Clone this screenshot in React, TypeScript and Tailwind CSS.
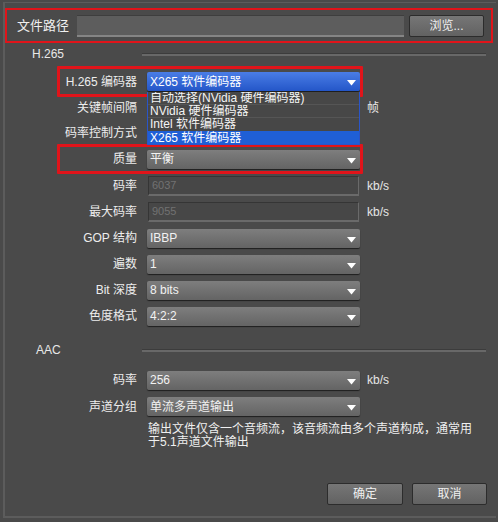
import React from "react";

function Arrow() {
  return (
    <svg width="9" height="6" viewBox="0 0 9 6" className="absolute right-[4px] top-[8px]">
      <polygon points="0,0 9,0 4.5,5.5" fill="#ffffff" />
    </svg>
  );
}

function Select({ value, blue = false }: { value: string; blue?: boolean }) {
  return (
    <div
      className={
        blue
          ? "relative w-[213px] h-[19px] rounded-[2px] flex items-center pl-[3px] text-[12px] text-white bg-linear-to-b from-[#4a7de6] to-[#2456c8] shadow-[0_1px_1px_#1a1a1a]"
          : "relative w-[213px] h-[19px] rounded-[2px] flex items-center pl-[3px] text-[12px] text-[#f2f2f2] bg-linear-to-b from-[#7e7e7e] to-[#646464] shadow-[0_1px_1px_#1e1e1e]"
      }
    >
      <span className="leading-none">{value}</span>
      <Arrow />
    </div>
  );
}

function Disabled({ value }: { value: string }) {
  return (
    <div className="w-[211px] h-[20px] ml-[1px] bg-[#474747] border-t border-l border-[#353535] border-b-2 border-r border-b-[#6a6a6a] border-r-[#6a6a6a] flex items-center pl-[3px] text-[11px] text-[#727272]">
      {value}
    </div>
  );
}

function Row({
  label,
  h,
  children,
  unit,
  red = false,
}: {
  label: string;
  h: string;
  children?: React.ReactNode;
  unit?: string;
  red?: boolean;
}) {
  return (
    <div className={`relative flex items-center ${h}`}>
      <div className="w-[132px] text-right text-[12px] text-[#ededed]">{label}</div>
      <div className="ml-[10px] w-[213px] flex items-center">{children}</div>
      {unit ? <div className="ml-[7px] text-[12px] text-[#e6e6e6]">{unit}</div> : null}
      {red ? (
        <div className="absolute left-[52px] top-[-2px] bottom-[-2px] w-[306px] border-[3px] border-[#e0141a] rounded-[1px]" />
      ) : null}
    </div>
  );
}

function Header({ label, pl }: { label: string; pl: string }) {
  return (
    <div className="flex items-center h-[18px]">
      <div className={`w-[137px] text-[12px] text-[#e8e8e8] ${pl}`}>{label}</div>
      <div className="flex-1 mr-[10px] h-[3px] border-t border-[#3c3c3c] bg-[#686868]" />
    </div>
  );
}

export default function App() {
  return (
    <div className="w-[498px] h-[522px] bg-[#4a4a4a] overflow-hidden font-['Liberation_Sans','Noto_Sans_CJK_SC',sans-serif] pt-[2px] pl-[3px]">
      <div className="relative w-[493px] h-[516px] border-l-2 border-t border-b-2 border-[#5c5c5c] flex flex-col">
        {/* file path */}
        <div className="mt-[5px] w-[488px] h-[35px] border-2 border-[#e0141a] flex items-center pl-[10px]">
          <div className="w-[60px] text-[13px] text-[#f0f0f0]">文件路径</div>
          <div className="w-[327px] h-[22px] bg-[#5d5d5d] border-t border-[#3e3e3e] border-b-2 border-b-[#858585]" />
          <div className="ml-[5px] w-[75px] h-[22px] rounded-[2px] bg-linear-to-b from-[#767676] to-[#626262] border border-[#2c2c2c] flex items-center justify-center text-[12px] text-[#f0f0f0]">
            浏览...
          </div>
        </div>

        <div className="mt-[2px]">
          <Header label="H.265" pl="pl-[27px]" />
        </div>

        <div className="mt-[5px] flex flex-col relative">
          <Row label="H.265 编码器" h="h-[27px]" red>
            <Select value="X265 软件编码器" blue />
          </Row>
          <Row label="关键帧间隔" h="h-[25px]" unit="帧" />
          <Row label="码率控制方式" h="h-[26px]" />
          <Row label="质量" h="h-[26px]" red>
            <Select value="平衡" />
          </Row>
          <Row label="码率" h="h-[27px]" unit="kb/s">
            <Disabled value="6037" />
          </Row>
          <Row label="最大码率" h="h-[26px]" unit="kb/s">
            <Disabled value="9055" />
          </Row>
          <Row label="GOP 结构" h="h-[26px]">
            <Select value="IBBP" />
          </Row>
          <Row label="遍数" h="h-[26px]">
            <Select value="1" />
          </Row>
          <Row label="Bit 深度" h="h-[26px]">
            <Select value="8 bits" />
          </Row>
          <Row label="色度格式" h="h-[26px]">
            <Select value="4:2:2" />
          </Row>

          {/* open dropdown list */}
          <div className="absolute left-[142px] top-[24px] w-[213px] h-[53px] bg-[#474747] border-l border-r border-b border-[#2a55c8] overflow-hidden text-[12px] text-[#f4f4f4]">
            <div className="h-[13px] leading-[12px] border-b border-[#555555] pl-[2px] whitespace-nowrap">自动选择(NVidia 硬件编码器)</div>
            <div className="h-[13px] leading-[12px] border-b border-[#555555] pl-[2px] whitespace-nowrap">NVidia 硬件编码器</div>
            <div className="h-[13px] leading-[12px] pl-[2px] whitespace-nowrap">Intel 软件编码器</div>
            <div className="h-[14px] leading-[14px] bg-[#1f5fd6] pl-[2px] text-white whitespace-nowrap">X265 软件编码器</div>
          </div>
        </div>

        <div className="mt-[12px]">
          <Header label="AAC" pl="pl-[31px]" />
        </div>

        <div className="mt-[8px] flex flex-col">
          <Row label="码率" h="h-[26px]" unit="kb/s">
            <Select value="256" />
          </Row>
          <Row label="声道分组" h="h-[27px]">
            <Select value="单流多声道输出" />
          </Row>
          <div className="ml-[143px] w-[332px] text-[12px] leading-[13px] text-[#f0f0f0] mt-[3px]">
            输出文件仅含一个音频流，该音频流由多个声道构成，通常用于5.1声道文件输出
          </div>
        </div>

        <div className="mt-[34px] flex justify-end gap-[9px] mr-[9px]">
          <div className="w-[76px] h-[22px] rounded-[2px] bg-linear-to-b from-[#767676] to-[#626262] border border-[#2c2c2c] flex items-center justify-center text-[12px] text-[#f0f0f0]">
            确定
          </div>
          <div className="w-[75px] h-[22px] rounded-[2px] bg-linear-to-b from-[#767676] to-[#626262] border border-[#2c2c2c] flex items-center justify-center text-[12px] text-[#f0f0f0]">
            取消
          </div>
        </div>
      </div>
    </div>
  );
}
